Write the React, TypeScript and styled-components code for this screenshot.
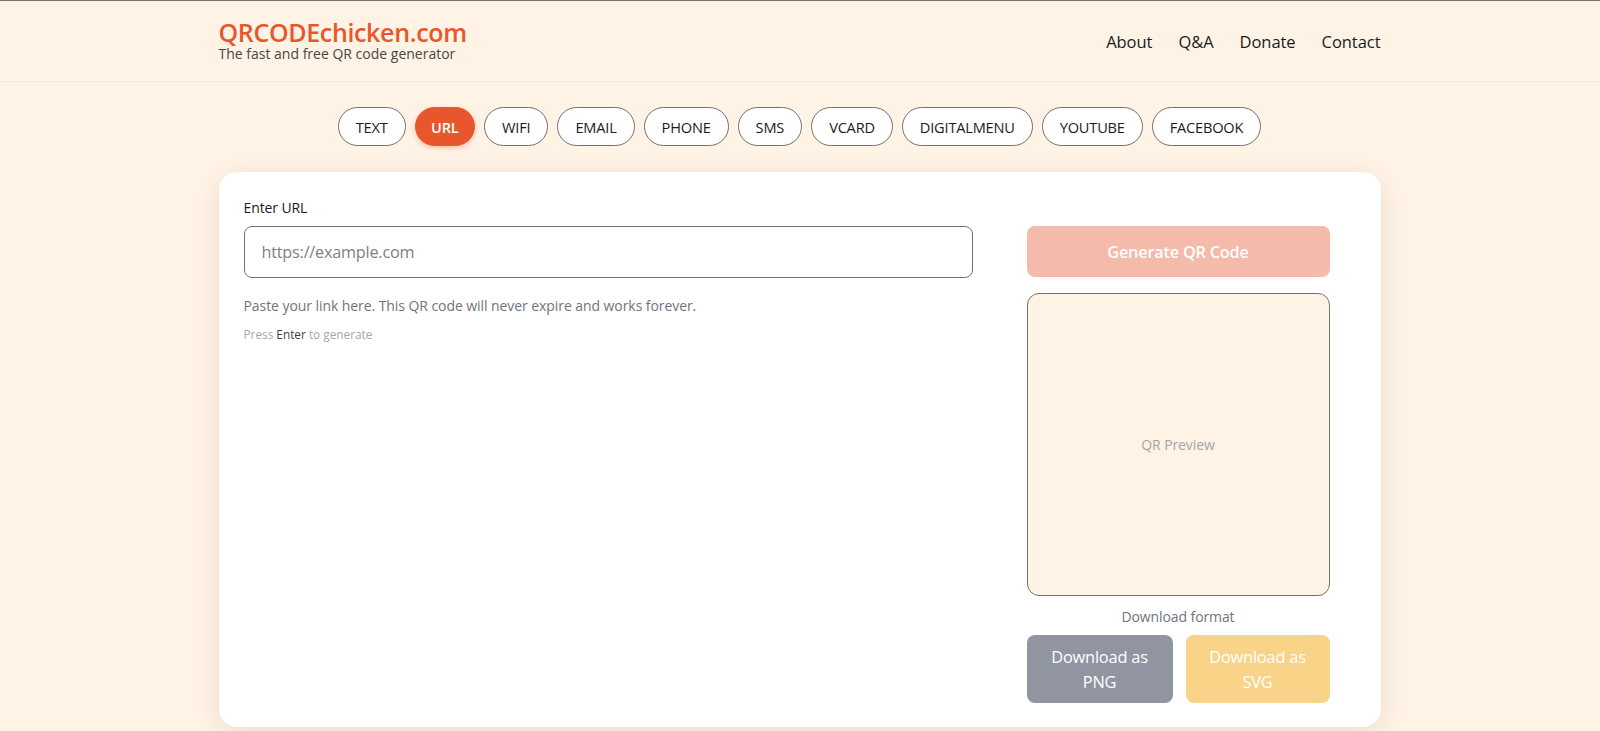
import styled, { createGlobalStyle } from 'styled-components';

const GlobalStyle = createGlobalStyle`
  html, body {
    margin: 0;
    height: 100%;
    overflow: hidden;
    background: #fff3e6;
  }
  body {
    font-family: "Open Sans", "Noto Sans", sans-serif;
    color: #1b1b20;
  }
  * {
    box-sizing: border-box;
  }
`;

const Page = styled.div`
  min-height: 731px;
  padding-right: 1px;
  border-top: 1px solid #7d6f62;
`;

const Header = styled.header`
  height: 81px;
  margin-right: -1px;
  padding-right: 1px;
  border-bottom: 1px solid #efe6dc;
`;

const HeaderInner = styled.div`
  width: 1162px;
  height: 100%;
  margin: 0 auto;
  display: flex;
  align-items: center;
  justify-content: space-between;
`;

const Brand = styled.div`
  display: flex;
  flex-direction: column;
  gap: 1px;
  padding-bottom: 2px;
`;

const Logo = styled.div`
  font-size: 25px;
  line-height: 26px;
  font-weight: 600;
  letter-spacing: -0.35px;
  color: #e8572b;
`;

const Tagline = styled.div`
  font-size: 14px;
  line-height: 16px;
  color: #4a4643;
  letter-spacing: 0;
`;

const Nav = styled.nav`
  display: flex;
  gap: 26px;
`;

const NavLink = styled.a`
  font-size: 16.5px;
  font-weight: 500;
  color: #1b1b20;
  letter-spacing: -0.05px;
`;

const Tabs = styled.div`
  display: flex;
  justify-content: center;
  gap: 9px;
  padding-top: 25px;
`;

const Tab = styled.button<{ $active?: boolean }>`
  height: 39px;
  padding: 0 ${({ $active }) => ($active ? 15.5 : 17)}px;
  border-radius: 20px;
  font: inherit;
  font-size: 14.6px;
  font-weight: ${({ $active }) => ($active ? 600 : 400)};
  letter-spacing: -0.2px;
  color: ${({ $active }) => ($active ? '#fff' : '#1b1b20')};
  background: ${({ $active }) => ($active ? '#e8572b' : '#fff')};
  border: 1px solid ${({ $active }) => ($active ? '#e8572b' : '#77706a')};
  box-shadow: ${({ $active }) => ($active ? '0 2px 5px rgba(232,87,43,0.3)' : 'none')};
`;

const Card = styled.main`
  width: 1162px;
  height: 555px;
  margin: 26px auto 0;
  padding: 25px 51px 25px 25px;
  background: #fff;
  border-radius: 18px;
  box-shadow: 0 6px 24px rgba(90, 60, 30, 0.12);
  display: grid;
  grid-template-columns: 729px 303px;
  column-gap: 54px;
`;

const FormColumn = styled.section`
  display: flex;
  flex-direction: column;
`;

const Label = styled.label`
  font-size: 14px;
  line-height: 21px;
  font-weight: 500;
  letter-spacing: -0.1px;
  color: #1b1b20;
`;

const UrlInput = styled.input`
  height: 52px;
  margin-top: 8px;
  padding: 0 17px;
  font: inherit;
  font-size: 16.2px;
  letter-spacing: -0.2px;
  border: 1px solid #77706a;
  border-radius: 8px;
  background: #fff;
  outline: none;

  &::placeholder {
    color: #7c8087;
    opacity: 1;
  }
`;

const Hint = styled.p`
  margin: 18px 0 0;
  font-size: 14px;
  line-height: 20px;
  letter-spacing: -0.07px;
  color: #6f747d;
`;

const SubHint = styled.p`
  margin: 10px 0 0;
  font-size: 11.8px;
  line-height: 16px;
  color: #a3a7ae;
`;

const EnterKey = styled.strong`
  font-weight: 500;
  color: #3d3f46;
`;

const PreviewColumn = styled.aside`
  display: flex;
  flex-direction: column;
  padding-top: 29px;
`;

const GenerateButton = styled.button`
  height: 51px;
  border: none;
  border-radius: 8px;
  font: inherit;
  font-size: 16.3px;
  font-weight: 600;
  letter-spacing: -0.2px;
  color: #fff;
  background: #f4baaa;
`;

const Preview = styled.div`
  height: 303px;
  margin-top: 16px;
  display: flex;
  align-items: center;
  justify-content: center;
  font-size: 14px;
  letter-spacing: -0.1px;
  color: #a4a5a6;
  background: #fff3e6;
  border: 1px solid #77706a;
  border-radius: 12px;
`;

const FormatLabel = styled.div`
  margin-top: 11px;
  font-size: 14px;
  line-height: 20px;
  letter-spacing: -0.1px;
  text-align: center;
  color: #6f747d;
`;

const Downloads = styled.div`
  display: grid;
  grid-template-columns: 146px 144px;
  column-gap: 13px;
  margin-top: 8px;
`;

const DownloadButton = styled.button<{ $color: string }>`
  height: 68px;
  padding: 0 16px;
  border: none;
  border-radius: 8px;
  font: inherit;
  font-size: 16.4px;
  line-height: 25px;
  letter-spacing: -0.2px;
  color: #fff;
  background: ${({ $color }) => $color};
`;

const tabs = ['TEXT', 'URL', 'WIFI', 'EMAIL', 'PHONE', 'SMS', 'VCARD', 'DIGITALMENU', 'YOUTUBE', 'FACEBOOK'];
const links = ['About', 'Q&A', 'Donate', 'Contact'];

const App = () => {
  return (
    <Page>
      <GlobalStyle />
      <Header>
        <HeaderInner>
          <Brand>
            <Logo>QRCODEchicken.com</Logo>
            <Tagline>The fast and free QR code generator</Tagline>
          </Brand>
          <Nav>
            {links.map((link) => (
              <NavLink key={link}>{link}</NavLink>
            ))}
          </Nav>
        </HeaderInner>
      </Header>
      <Tabs>
        {tabs.map((tab) => (
          <Tab key={tab} $active={tab === 'URL'}>
            {tab}
          </Tab>
        ))}
      </Tabs>
      <Card>
        <FormColumn>
          <Label>Enter URL</Label>
          <UrlInput placeholder="https://example.com" />
          <Hint>Paste your link here. This QR code will never expire and works forever.</Hint>
          <SubHint>
            Press <EnterKey>Enter</EnterKey> to generate
          </SubHint>
        </FormColumn>
        <PreviewColumn>
          <GenerateButton>Generate QR Code</GenerateButton>
          <Preview>QR Preview</Preview>
          <FormatLabel>Download format</FormatLabel>
          <Downloads>
            <DownloadButton $color="#9195a1">Download as PNG</DownloadButton>
            <DownloadButton $color="#f9d388">Download as SVG</DownloadButton>
          </Downloads>
        </PreviewColumn>
      </Card>
    </Page>
  );
};

export default App;
